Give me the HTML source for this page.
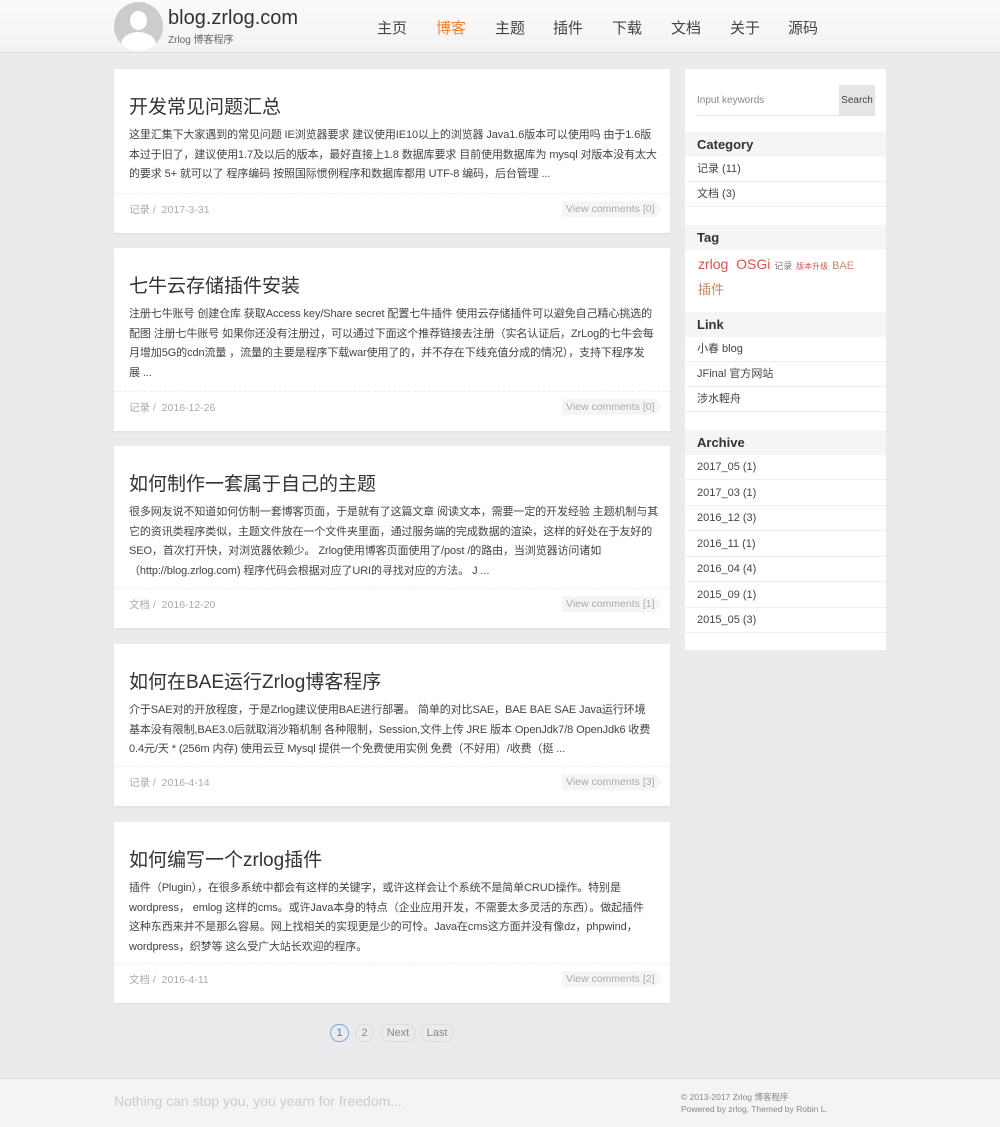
<!DOCTYPE html>
<html><head><meta charset="utf-8">
<style>
*{margin:0;padding:0;box-sizing:border-box}
body{width:1000px;height:1127px;background:#ebebed;font-family:"Liberation Sans","Noto Sans CJK SC",sans-serif;color:#444;position:relative;overflow:hidden}
.hd{position:absolute;left:0;top:0;width:1000px;height:53px;background:linear-gradient(#fbfbfb,#f2f2f2);border-bottom:1px solid #ddd}
.av{position:absolute;left:114px;top:2px;width:49px;height:49px;border-radius:50%;background:#ccc;overflow:hidden}
.logo{position:absolute;left:168px;top:7px;font-size:20px;color:#333}
.sub{position:absolute;left:168px;top:31px;font-size:10px;color:#666}
.nav{position:absolute;top:17px;font-size:15px;color:#444}
.card{position:absolute;left:114px;width:556px;background:#fff;box-shadow:0 1px 2px rgba(0,0,0,.06)}
.card h2{position:absolute;left:15px;top:23px;font-size:19px;font-weight:normal;color:#333}
.card p{position:absolute;left:15px;top:57px;width:540px;font-size:11px;line-height:19.5px;color:#444;letter-spacing:-0.1px;white-space:nowrap}
.card .ft{position:absolute;left:0;right:0;bottom:0;height:40px;border-top:1px dashed #eee}
.card .ft span{position:absolute;left:15px;top:8px;font-size:10.5px;color:#aaa}
.vc{position:absolute;left:448px;top:7px;height:16px;width:93px;background:#f5f5f5;font-size:10.5px;color:#aaa;line-height:16px;padding-left:4px;white-space:nowrap}
.vc:after{content:"";position:absolute;right:-7px;top:0;border-left:7px solid #f5f5f5;border-top:8px solid transparent;border-bottom:8px solid transparent}
.sb{position:absolute;left:685px;top:69px;width:201px;height:581px;background:#fff}
.sh{position:absolute;left:0;width:201px;height:25px;background:#f5f5f5;font-weight:bold;font-size:13px;color:#333;padding-left:12px;line-height:25px}
.si{position:absolute;left:0;width:201px;height:25px;border-bottom:1px solid #eee;font-size:11px;color:#444;padding-left:12px;line-height:25px}
.pg{position:absolute;top:1024px;height:18px;border:1px solid #ddd;border-radius:9px;font-size:11px;color:#888;text-align:center;line-height:16px}
.fo{position:absolute;left:0;top:1078px;width:1000px;height:49px;background:#f4f4f4;border-top:1px solid #e0e0e0}
</style></head><body>
<div class="hd">
<div class="av"><div style="position:absolute;left:16px;top:9px;width:17px;height:19px;border-radius:50%;background:#fff"></div><div style="position:absolute;left:7px;top:30px;width:35px;height:25px;border-radius:50% 50% 0 0;background:#fff"></div></div>
<div class="logo">blog.zrlog.com</div><div class="sub">Zrlog 博客程序</div>
<div class="nav" style="left:377px">主页</div><div class="nav" style="left:436px;color:#f08030">博客</div><div class="nav" style="left:495px">主题</div><div class="nav" style="left:553px">插件</div><div class="nav" style="left:612px">下载</div><div class="nav" style="left:671px">文档</div><div class="nav" style="left:730px">关于</div><div class="nav" style="left:788px">源码</div>
</div>

<div class="card" style="top:69px;height:164px"><h2>开发常见问题汇总</h2><p>这里汇集下大家遇到的常见问题 IE浏览器要求 建议使用IE10以上的浏览器 Java1.6版本可以使用吗 由于1.6版<br>本过于旧了，建议使用1.7及以后的版本，最好直接上1.8 数据库要求 目前使用数据库为 mysql 对版本没有太大<br>的要求 5+ 就可以了 程序编码 按照国际惯例程序和数据库都用 UTF-8 编码，后台管理 ...</p><div class="ft"><span>记录 /&nbsp; 2017-3-31</span><div class="vc">View comments [0]</div></div></div>

<div class="card" style="top:248px;height:183px"><h2>七牛云存储插件安装</h2><p>注册七牛账号 创建仓库 获取Access key/Share secret 配置七牛插件 使用云存储插件可以避免自己精心挑选的<br>配图 注册七牛账号 如果你还没有注册过，可以通过下面这个推荐链接去注册（实名认证后，ZrLog的七牛会每<br>月增加5G的cdn流量 ，流量的主要是程序下载war使用了的，并不存在下线充值分成的情况），支持下程序发<br>展 ...</p><div class="ft"><span>记录 /&nbsp; 2016-12-26</span><div class="vc">View comments [0]</div></div></div>

<div class="card" style="top:446px;height:182px"><h2>如何制作一套属于自己的主题</h2><p>很多网友说不知道如何仿制一套博客页面，于是就有了这篇文章 阅读文本，需要一定的开发经验 主题机制与其<br>它的资讯类程序类似，主题文件放在一个文件夹里面，通过服务端的完成数据的渲染，这样的好处在于友好的<br>SEO，首次打开快，对浏览器依赖少。 Zrlog使用博客页面使用了/post /的路由，当浏览器访问诸如<br>（http://blog.zrlog.com) 程序代码会根据对应了URI的寻找对应的方法。 J ...</p><div class="ft"><span>文档 /&nbsp; 2016-12-20</span><div class="vc">View comments [1]</div></div></div>

<div class="card" style="top:644px;height:162px"><h2>如何在BAE运行Zrlog博客程序</h2><p>介于SAE对的开放程度，于是Zrlog建议使用BAE进行部署。 简单的对比SAE，BAE BAE SAE Java运行环境<br>基本没有限制,BAE3.0后就取消沙箱机制 各种限制，Session,文件上传 JRE 版本 OpenJdk7/8 OpenJdk6 收费<br>0.4元/天 * (256m 内存) 使用云豆 Mysql 提供一个免费使用实例 免费（不好用）/收费（挺 ...</p><div class="ft"><span>记录 /&nbsp; 2016-4-14</span><div class="vc">View comments [3]</div></div></div>

<div class="card" style="top:822px;height:181px"><h2>如何编写一个zrlog插件</h2><p>插件（Plugin），在很多系统中都会有这样的关键字，或许这样会让个系统不是简单CRUD操作。特别是<br>wordpress， emlog 这样的cms。或许Java本身的特点（企业应用开发，不需要太多灵活的东西）。做起插件<br>这种东西来并不是那么容易。网上找相关的实现更是少的可怜。Java在cms这方面并没有像dz，phpwind，<br>wordpress，织梦等 这么受广大站长欢迎的程序。</p><div class="ft"><span>文档 /&nbsp; 2016-4-11</span><div class="vc">View comments [2]</div></div></div>

<div class="sb">
<div style="position:absolute;left:12px;top:16px;width:142px;height:31px;border-bottom:1px solid #e5e5e5;font-size:10px;color:#888;line-height:31px">Input keywords</div>
<div style="position:absolute;left:154px;top:16px;width:36px;height:31px;background:#e5e5e5;font-size:10px;color:#444;line-height:31px;text-align:center">Search</div>
<div class="sh" style="top:63px">Category</div>
<div class="si" style="top:88px">记录 (11)</div><div class="si" style="top:113px">文档 (3)</div>
<div class="sh" style="top:156px">Tag</div>
<div style="position:absolute;left:13px;top:184px;font-size:14px;color:#d9534f;width:180px;line-height:22px"><span>zrlog</span>&nbsp; <span>OSGi</span> <span style="font-size:9px;color:#777">记录</span> <span style="font-size:8px;color:#d9534f">版本升级</span> <span style="font-size:11px;color:#d08a6a">BAE</span><br><span style="font-size:13px;color:#c9845f">插件</span></div>
<div class="sh" style="top:243px">Link</div>
<div class="si" style="top:268px">小春 blog</div><div class="si" style="top:293px">JFinal 官方网站</div><div class="si" style="top:318px">涉水輕舟</div>
<div class="sh" style="top:361px">Archive</div>
<div class="si" style="top:386px">2017_05 (1)</div><div class="si" style="top:411.5px">2017_03 (1)</div><div class="si" style="top:437px">2016_12 (3)</div><div class="si" style="top:462.5px">2016_11 (1)</div><div class="si" style="top:488px">2016_04 (4)</div><div class="si" style="top:513.5px">2015_09 (1)</div><div class="si" style="top:539px">2015_05 (3)</div>
</div>

<div class="pg" style="left:330px;width:19px;border-color:#7aa9e0;color:#4a7fc8">1</div>
<div class="pg" style="left:355px;width:19px">2</div>
<div class="pg" style="left:380px;width:36px">Next</div>
<div class="pg" style="left:420px;width:34px">Last</div>

<div class="fo">
<div style="position:absolute;left:114px;top:14px;font-size:14px;color:#ccc">Nothing can stop you, you yearn for freedom...</div>
<div style="position:absolute;left:681px;top:12px;font-size:8.5px;color:#888">© 2013-2017 Zrlog 博客程序</div>
<div style="position:absolute;left:681px;top:25px;font-size:8.5px;color:#888">Powered by zrlog, Themed by Robin L.</div>
</div>
</body></html>
